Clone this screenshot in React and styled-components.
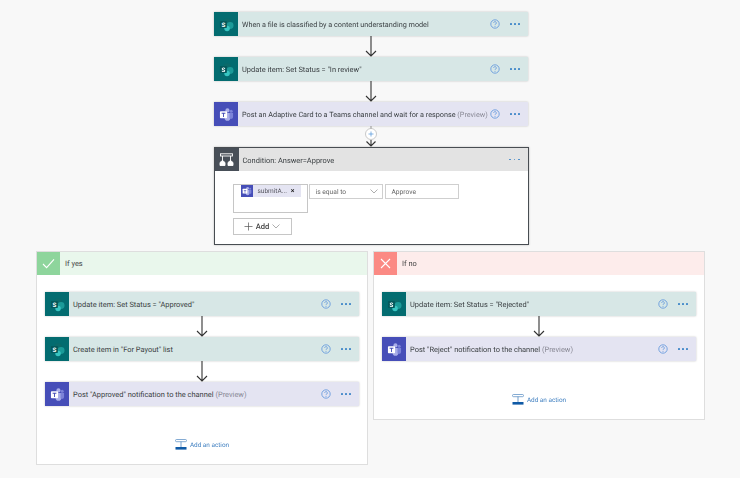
import React from "react";
import styled, { createGlobalStyle } from "styled-components";

const Global = createGlobalStyle`
  html, body { margin: 0; padding: 0; background: #f8f8f8; }
  body { font-family: Roboto, "Liberation Sans", sans-serif; color: #333; text-rendering: geometricPrecision; }
`;

const Page = styled.div`
  width: 740px;
  height: 478px;
  overflow: hidden;
  padding-top: 12px;
  box-sizing: border-box;
  display: flex;
  flex-direction: column;
  align-items: flex-start;
  filter: blur(0.3px);
`;

const Flow = styled.div`
  display: flex;
  flex-direction: column;
  align-items: center;
  width: 314px;
`;

const TopFlow = styled(Flow)`
  margin-left: 214px;
`;

const CardRow = styled.div`
  width: 314px;
  height: 24px;
  display: flex;
  align-items: stretch;
  flex: none;
  background: ${(p) => (p.$kind === "teams" ? "#e4e4f2" : "#d7e7e6")};
  box-shadow: 0 0 2px rgba(0, 0, 0, 0.22);
`;

const IconTile = styled.div`
  width: 24px;
  flex: none;
  display: flex;
  align-items: center;
  justify-content: center;
  background: ${(p) => p.$bg};
`;

const Title = styled.div`
  flex: 1;
  min-width: 0;
  padding-left: 4px;
  font-size: ${(p) => (p.$compact ? 7.25 : 7.45)}px;
  line-height: 25px;
  color: #3a3f42;
  white-space: nowrap;
`;

const Preview = styled.span`
  color: #8a8a96;
`;

const HelpIcon = styled.div`
  width: 20px;
  flex: none;
  display: flex;
  align-items: center;
  justify-content: center;
`;

const Dots = styled.div`
  width: 20px;
  flex: none;
  display: flex;
  gap: 2.5px;
  align-items: center;
  justify-content: center;
  margin-right: 3px;
`;

const Dot = styled.i`
  display: block;
  width: 1.7px;
  height: 1.7px;
  border-radius: 50%;
  background: #3f86c8;
`;

const ArrowGap = styled.svg`
  display: block;
  flex: none;
  width: 14px;
  height: 21px;
`;

const ConditionCard = styled.div`
  width: 315px;
  height: 98px;
  box-sizing: border-box;
  border: 1px solid #484d52;
  background: #fff;
  display: flex;
  flex-direction: column;
  flex: none;
  box-shadow: 0 0 2px rgba(0, 0, 0, 0.25);
`;

const ConditionHeader = styled.div`
  height: 23px;
  flex: none;
  display: flex;
  background: #e3e3e3;
`;

const ConditionBody = styled.div`
  padding: 13px 0 0 18px;
  display: flex;
  flex-direction: column;
  gap: 5px;
`;

const ConditionLine = styled.div`
  display: flex;
  align-items: flex-start;
  gap: 1px;
`;

const TokenBox = styled.div`
  width: 75px;
  height: 29px;
  box-sizing: border-box;
  border: 1px solid #c6c6c6;
  padding: 0 0 0 7px;
  display: flex;
  align-items: flex-start;
`;

const TokenIcon = styled.div`
  width: 12px;
  height: 12px;
  background: #464eb8;
  display: flex;
  align-items: center;
  justify-content: center;
  flex: none;
`;

const TokenBody = styled.div`
  width: 48px;
  height: 12px;
  background: #e4e4f2;
  display: flex;
  align-items: center;
  justify-content: space-between;
  font-size: 6.5px;
  color: #55555f;
  padding: 0 6px 0 5px;
  box-sizing: border-box;
`;

const TokenClose = styled.span`
  color: #222;
  font-size: 7px;
  font-weight: 700;
`;

const FieldBox = styled.div`
  width: 74px;
  height: 15px;
  box-sizing: border-box;
  border: 1px solid #cfcfcf;
  display: flex;
  align-items: center;
  justify-content: space-between;
  font-size: 6.7px;
  color: #666;
  padding: 0 4px 0 6px;
  margin-right: ${(p) => p.$mr || 0}px;
`;

const AddButton = styled.div`
  width: 59px;
  height: 17px;
  box-sizing: border-box;
  border: 1px solid #c6c6c6;
  display: flex;
  align-items: center;
  justify-content: center;
  gap: 3px;
  font-size: 7.6px;
  font-weight: 500;
  color: #444;
`;

const Branches = styled.div`
  display: flex;
  align-items: flex-start;
  gap: 5px;
  margin: 6px 0 0 36px;
`;

const Branch = styled.div`
  width: 332px;
  height: ${(p) => p.$h}px;
  box-sizing: border-box;
  background: #fff;
  border: 1px solid #dedede;
  display: flex;
  flex-direction: column;
`;

const BranchHeader = styled.div`
  height: 23px;
  flex: none;
  display: flex;
  align-items: center;
  background: ${(p) => p.$bg};
`;

const BranchIcon = styled.div`
  width: 23px;
  height: 23px;
  flex: none;
  display: flex;
  align-items: center;
  justify-content: center;
  background: ${(p) => p.$bg};
`;

const BranchTitle = styled.div`
  padding-left: 5px;
  font-size: 7.45px;
  color: #444;
`;

const BranchBody = styled(Flow)`
  margin: 17px 0 0 8px;
`;

const AddAction = styled.div`
  display: flex;
  align-items: center;
  gap: 3px;
  margin-top: ${(p) => p.$mt}px;
  font-size: 6.4px;
  color: #3f7fc0;
  white-space: nowrap;
`;

const SharePointIcon = () => (
  <svg width="15" height="15" viewBox="0 0 16 16">
    <circle cx="8.6" cy="5.6" r="4.4" fill="#0b6a6a" />
    <circle cx="11.8" cy="9" r="3.7" fill="#1b9a98" />
    <circle cx="8.6" cy="12.2" r="2.9" fill="#37c6c2" />
    <rect x="1" y="4.2" width="7.4" height="7.4" rx="0.8" fill="#05595c" />
    <text x="4.7" y="10.2" textAnchor="middle" fontSize="6.6" fontWeight="700" fill="#fff" fontFamily="Roboto">S</text>
  </svg>
);

const TeamsIcon = ({ size = 15 }) => (
  <svg width={size} height={size} viewBox="0 0 16 16">
    <circle cx="9" cy="3.6" r="2.2" fill="#a9aee8" />
    <circle cx="13" cy="4.4" r="1.6" fill="#7b83d8" />
    <path d="M6 6.4h6v5.2a3 3 0 0 1-6 0z" fill="#a9aee8" />
    <path d="M11.2 6.4H15v4.2a2.2 2.2 0 0 1-3.8 1.4z" fill="#7b83d8" />
    <rect x="1" y="4.4" width="7.6" height="7.6" rx="0.8" fill="#fff" />
    <path d="M2.8 6.2h4v1H5.3v3.4H4.3V7.2H2.8z" fill="#464eb8" />
  </svg>
);

const ConditionIcon = () => (
  <svg width="15" height="14" viewBox="0 0 15 14" fill="none" stroke="#fff" strokeWidth="0.9">
    <rect x="1.5" y="0.8" width="12" height="2.2" />
    <path d="M3.5 3v5M11.5 3v5" />
    <path d="M1 9.5L3.5 7.5 6 9.5v3H1zM9 9.5l2.5-2 2.5 2v3H9z" fill="#fff" />
  </svg>
);

const CheckIcon = () => (
  <svg width="13" height="13" viewBox="0 0 13 13" fill="none" stroke="#fff" strokeWidth="1.1">
    <path d="M1 7l3.6 3.6L12 2.4" />
  </svg>
);

const CrossIcon = () => (
  <svg width="11" height="11" viewBox="0 0 11 11" fill="none" stroke="#fff" strokeWidth="1.1">
    <path d="M1 1l9 9M10 1l-9 9" />
  </svg>
);

const Help = () => (
  <HelpIcon>
    <svg width="10" height="10" viewBox="0 0 10 10" fill="none">
      <circle cx="5" cy="5" r="4.2" stroke="#5b93dc" strokeWidth="0.8" />
      <path d="M3.7 3.9a1.3 1.3 0 1 1 2 1.1c-.5.3-.7.5-.7 1" stroke="#5b93dc" strokeWidth="0.8" />
      <circle cx="5" cy="7.3" r="0.5" fill="#5b93dc" />
    </svg>
  </HelpIcon>
);

const More = () => (
  <Dots>
    <Dot />
    <Dot />
    <Dot />
  </Dots>
);

const Arrow = () => (
  <ArrowGap viewBox="0 0 14 21" fill="none" stroke="#333" strokeWidth="1.1">
    <path d="M7 0v20M2 15L7 20l5-5" />
  </ArrowGap>
);

const ArrowPlus = () => (
  <ArrowGap viewBox="0 0 14 21" fill="none" stroke="#333" strokeWidth="1.1">
    <path d="M7 0v4" stroke="#9a9a9a" />
    <path d="M7 14v6M2.5 15.5L7 20l4.5-4.5" />
    <circle cx="7" cy="8" r="5.5" fill="#fff" stroke="#a8a8a8" strokeWidth="0.6" />
    <path d="M7 5.5v5M4.5 8h5" stroke="#4f92d8" strokeWidth="0.7" />
  </ArrowGap>
);

const Card = ({ kind, title, preview, compact }) => (
  <CardRow $kind={kind}>
    <IconTile $bg={kind === "teams" ? "#464eb8" : "#036c70"}>
      {kind === "teams" ? <TeamsIcon /> : <SharePointIcon />}
    </IconTile>
    <Title $compact={compact}>
      {title}
      {preview && <Preview> (Preview)</Preview>}
    </Title>
    <Help />
    <More />
  </CardRow>
);

const Chevron = () => (
  <svg width="8" height="5" viewBox="0 0 8 5" fill="none" stroke="#777" strokeWidth="0.6">
    <path d="M0.5 0.5L4 4l3.5-3.5" />
  </svg>
);

const AddActionLink = ({ mt }) => (
  <AddAction $mt={mt}>
    <svg width="12" height="11" viewBox="0 0 12 11" fill="none">
      <rect x="0.5" y="0.5" width="11" height="2.2" rx="1" stroke="#4f86c0" strokeWidth="0.7" />
      <path d="M6 2.7V8" stroke="#4f86c0" strokeWidth="0.8" />
      <rect x="0.5" y="8" width="11" height="2.6" fill="#0f5aa6" />
    </svg>
    Add an action
  </AddAction>
);

export default function App() {
  return (
    <Page>
      <Global />
      <TopFlow>
        <Card kind="sp" compact title="When a file is classified by a content understanding model" />
        <Arrow />
        <Card kind="sp" title={'Update item: Set Status = "In review"'} />
        <Arrow />
        <Card kind="teams" compact title="Post an Adaptive Card to a Teams channel and wait for a response" preview />
        <ArrowPlus />
        <ConditionCard>
          <ConditionHeader>
            <IconTile $bg="#484f58">
              <ConditionIcon />
            </IconTile>
            <Title>Condition: Answer=Approve</Title>
            <More />
          </ConditionHeader>
          <ConditionBody>
            <ConditionLine>
              <TokenBox>
                <TokenIcon>
                  <TeamsIcon size={10} />
                </TokenIcon>
                <TokenBody>
                  submitA...
                  <TokenClose>×</TokenClose>
                </TokenBody>
              </TokenBox>
              <FieldBox $mr={1}>
                is equal to
                <Chevron />
              </FieldBox>
              <FieldBox>Approve</FieldBox>
            </ConditionLine>
            <AddButton>
              <svg width="9" height="9" viewBox="0 0 9 9" stroke="#555" strokeWidth="0.7">
                <path d="M4.5 0.5v8M0.5 4.5h8" />
              </svg>
              Add
              <Chevron />
            </AddButton>
          </ConditionBody>
        </ConditionCard>
      </TopFlow>
      <Branches>
        <Branch $h={214}>
          <BranchHeader $bg="#e9f7ec">
            <BranchIcon $bg="#8ed59c">
              <CheckIcon />
            </BranchIcon>
            <BranchTitle>If yes</BranchTitle>
          </BranchHeader>
          <BranchBody>
            <Card kind="sp" title={'Update item: Set Status = "Approved"'} />
            <Arrow />
            <Card kind="sp" title={'Create item in "For Payout" list'} />
            <Arrow />
            <Card kind="teams" title={'Post "Approved" notification to the channel'} preview />
            <AddActionLink mt={33} />
          </BranchBody>
        </Branch>
        <Branch $h={169}>
          <BranchHeader $bg="#fdeceb">
            <BranchIcon $bg="#fb8a84">
              <CrossIcon />
            </BranchIcon>
            <BranchTitle>If no</BranchTitle>
          </BranchHeader>
          <BranchBody>
            <Card kind="sp" title={'Update item: Set Status = "Rejected"'} />
            <Arrow />
            <Card kind="teams" title={'Post "Reject" notification to the channel'} preview />
            <AddActionLink mt={33} />
          </BranchBody>
        </Branch>
      </Branches>
    </Page>
  );
}
